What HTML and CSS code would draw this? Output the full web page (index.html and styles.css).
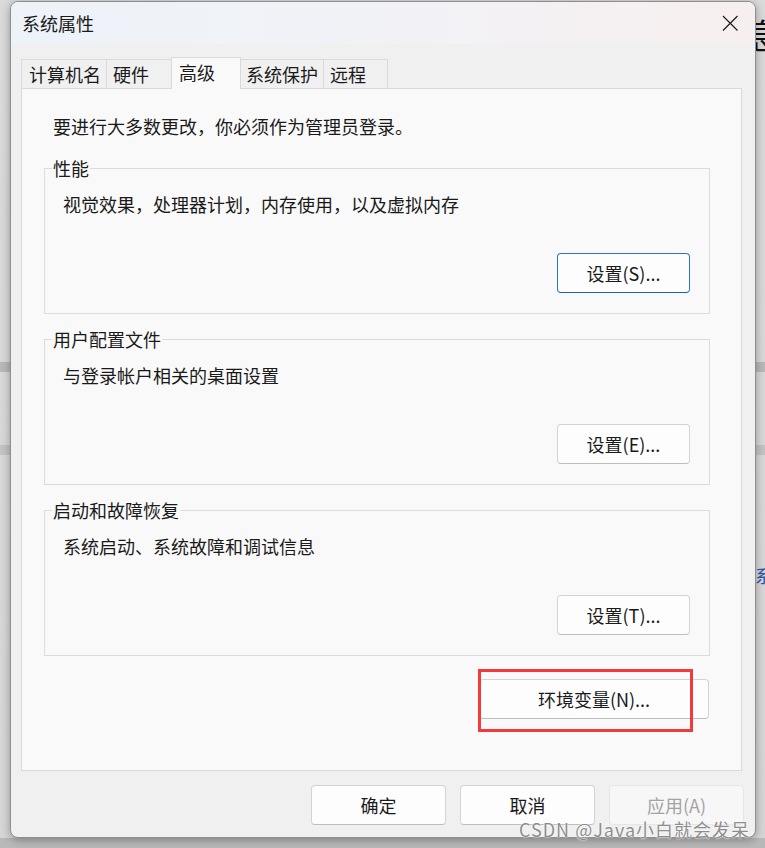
FILE: index.html
```html
<!DOCTYPE html>
<html lang="zh-CN">
<head>
<meta charset="utf-8">
<title>系统属性</title>
<link rel="stylesheet" href="styles.css">
</head>
<body>
<div class="screen">
  <div class="backdrop">
    <span class="bg-char bg-char-top">息</span>
    <span class="bg-band bg-band-a"></span>
    <span class="bg-band bg-band-b"></span>
    <span class="bg-char bg-char-blue">系</span>
  </div>
  <div class="dialog">
    <div class="titlebar">
      <span class="title">系统属性</span>
      <span class="close">
        <svg width="16" height="16" viewBox="0 0 16 16"><path d="M1 1 L15.5 15.5 M15.5 1 L1 15.5" stroke="#1a1a1a" stroke-width="1.15" fill="none"/></svg>
      </span>
    </div>
    <div class="body">
      <div class="tabs">
        <div class="tab tab-w1">计算机名</div>
        <div class="tab tab-w2">硬件</div>
        <div class="tab tab-w3 active">高级</div>
        <div class="tab tab-w4">系统保护</div>
        <div class="tab tab-w5 last">远程</div>
      </div>
      <div class="panel">
        <p class="notice">要进行大多数更改，你必须作为管理员登录。</p>
        <div class="group first">
          <div class="legend">性能</div>
          <div class="desc">视觉效果，处理器计划，内存使用，以及虚拟内存</div>
          <div class="btn btn-set focused">设置(S)...</div>
        </div>
        <div class="group">
          <div class="legend">用户配置文件</div>
          <div class="desc">与登录帐户相关的桌面设置</div>
          <div class="btn btn-set">设置(E)...</div>
        </div>
        <div class="group">
          <div class="legend">启动和故障恢复</div>
          <div class="desc">系统启动、系统故障和调试信息</div>
          <div class="btn btn-set">设置(T)...</div>
        </div>
        <div class="env-wrap">
          <div class="btn btn-env">环境变量(N)...</div>
          <div class="highlight"></div>
        </div>
      </div>
      <div class="footer">
        <div class="btn btn-foot">确定</div>
        <div class="btn btn-foot">取消</div>
        <div class="btn btn-foot disabled">应用(A)</div>
      </div>
    </div>
  </div>
  <div class="watermark">CSDN @Java小白就会发呆</div>
</div>
</body>
</html>
```

FILE: styles.css
```css
* { box-sizing: border-box; }

html, body {
  margin: 0;
  padding: 0;
}

body {
  width: 765px;
  height: 848px;
  overflow: hidden;
  background: #d3d3d3;
  font-family: "Noto Sans CJK SC", "Microsoft YaHei", sans-serif;
  font-size: 18px;
  color: #1a1a1a;
}

.screen {
  position: relative;
  width: 765px;
  height: 848px;
  padding: 1px 0 0 10px;
  background: linear-gradient(to bottom, #dadada 0, #d6d6d6 838px, #b9b9b9 838px);
}

/* desktop content behind the dialog */
.backdrop {
  position: absolute;
  inset: 0;
  z-index: 0;
}

.bg-char {
  position: absolute;
  line-height: 1;
}

.bg-char-top {
  left: 746px;
  top: 18px;
  font-size: 34px;
  color: #111;
}

.bg-char-blue {
  left: 755px;
  top: 566px;
  font-size: 18px;
  color: #2a55a5;
}

.bg-band {
  position: absolute;
  left: 0;
  width: 765px;
  height: 10px;
  background: #b8b8b8;
}

.bg-band-a { top: 362px; }
.bg-band-b { top: 445px; background: #c3c3c3; }

.dialog {
  position: relative;
  z-index: 1;
  width: 746px;
  height: 837px;
  border: 1px solid #8f8f8f;
  border-radius: 8px;
  background: #f0f0f0;
  overflow: hidden;
  display: flex;
  flex-direction: column;
  box-shadow: 0 2px 9px rgba(0, 0, 0, 0.32);
}

.titlebar {
  height: 42px;
  flex: none;
  display: flex;
  align-items: center;
  justify-content: space-between;
  padding-left: 11px;
  background: linear-gradient(to right, #edf3f9 0%, #f2f2f6 55%, #f7efef 100%);
}

.title {
  font-size: 18px;
  line-height: 1;
}

.close {
  width: 48px;
  height: 42px;
  margin-right: 1px;
  display: flex;
  align-items: center;
  justify-content: center;
}

.close svg { display: block; }

.body {
  flex: 1;
  display: flex;
  flex-direction: column;
  padding: 13px 13px 12px 10px;
}

.tabs {
  height: 31px;
  display: flex;
  align-items: flex-end;
}

.tab {
  height: 29px;
  border: 1px solid #dadada;
  border-bottom: 0;
  border-right: 0;
  padding-left: 6px;
  line-height: 28px;
  font-size: 18px;
  white-space: nowrap;
  background: #f0f0f0;
}

.tab-w1 { width: 85px; padding-left: 7px; }
.tab-w2 { width: 65px; }
.tab-w3 { width: 70px; padding-left: 7px; }
.tab-w4 { width: 82px; padding-left: 5px; }
.tab-w5 { width: 65px; }

.tab.last { border-right: 1px solid #dadada; }

.tab.active {
  position: relative;
  z-index: 1;
  height: 32px;
  margin-bottom: -1px;
  border-right: 1px solid #dadada;
  background: #f9f9f9;
}

.tab.active + .tab { border-left: 0; }

.panel {
  height: 683px;
  border: 1px solid #dadada;
  background: #f9f9f9;
  padding: 25px 31px 0 22px;
  display: flex;
  flex-direction: column;
}

.notice {
  margin: 0;
  padding-left: 9px;
  line-height: 24px;
}

.group {
  height: 146px;
  margin-top: 25px;
  border: 1px solid #dcdcdc;
  display: flex;
  flex-direction: column;
}

.group.first { margin-top: 30px; }

.legend {
  align-self: flex-start;
  margin: -13px 0 0 7px;
  padding: 0 1px;
  line-height: 24px;
  background: #f9f9f9;
}

.desc {
  margin-top: 12px;
  padding-left: 18px;
  line-height: 24px;
}

.btn {
  display: flex;
  align-items: center;
  justify-content: center;
  height: 40px;
  border: 1px solid #d3d3d3;
  border-bottom-color: #bdbdbd;
  border-radius: 4px;
  background: #fdfdfd;
  font-size: 18px;
  line-height: 1;
  color: #1a1a1a;
  white-space: nowrap;
}

.btn-set {
  align-self: flex-end;
  width: 133px;
  margin-top: 37px;
  margin-right: 19px;
}

.btn.focused {
  border-color: #2a74c4;
  border-bottom-color: #1a5fb0;
}

.env-wrap {
  position: relative;
  align-self: flex-end;
  margin-top: 23px;
  margin-right: 1px;
}

.btn-env { width: 230px; }

.highlight {
  position: absolute;
  left: -1px;
  top: -10px;
  width: 215px;
  height: 63px;
  border: 3px solid #f23a3a;
}

.footer {
  margin-top: 14px;
  margin-right: -2px;
  display: flex;
  justify-content: flex-end;
  gap: 14px;
}

.btn-foot { width: 135px; }

.btn.disabled {
  color: #a3a3a3;
  background: #f7f7f7;
  border-color: #e6e6e6;
}

.watermark {
  position: absolute;
  z-index: 2;
  left: 519px;
  top: 817px;
  font-size: 18px;
  line-height: 24px;
  letter-spacing: 1px;
  color: #8e8e8e;
  white-space: nowrap;
  text-shadow: 0 0 2px #ffffff, 0 0 1px #ffffff;
}
```
